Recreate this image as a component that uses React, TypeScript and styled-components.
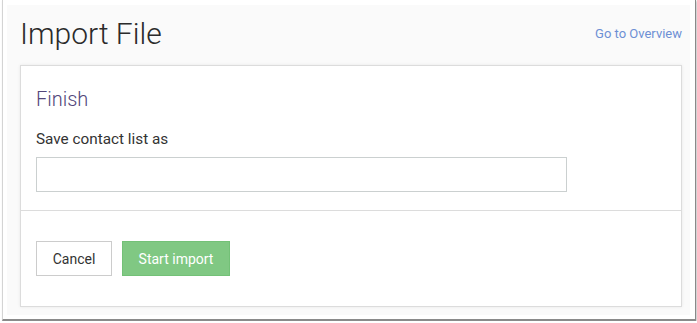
import React from "react";
import styled, { createGlobalStyle } from "styled-components";

const GlobalStyle = createGlobalStyle`
  html, body {
    margin: 0;
    padding: 0;
    background: #ffffff;
    font-family: Roboto, "Liberation Sans", Arial, sans-serif;
  }
`;

const Frame = styled.div`
  box-sizing: border-box;
  width: 694px;
  height: 321px;
  margin-left: 2px;
  padding: 5px 5px 4px 4px;
  background: #ffffff;
  border-left: 1px solid #d4d4d4;
  border-right: 1px solid #8a8a8a;
  border-bottom: 2px solid #8a8a8a;
  box-shadow: 1px 1px 2px rgba(0, 0, 0, 0.25);
`;

const Page = styled.div`
  box-sizing: border-box;
  height: 100%;
  background: #fafafa;
  padding: 0 6px 0 13px;
  display: flex;
  flex-direction: column;
`;

const Header = styled.div`
  box-sizing: border-box;
  height: 60px;
  padding-bottom: 3px;
  flex-shrink: 0;
  display: flex;
  align-items: center;
  justify-content: space-between;
`;

const Title = styled.h1`
  margin: 0;
  font-size: 30px;
  font-weight: 300;
  color: #2b2b2b;
`;

const OverviewLink = styled.a`
  font-size: 13px;
  color: #6d8fd4;
  text-decoration: none;
  margin-right: 2px;
  cursor: pointer;
`;

const Card = styled.div`
  box-sizing: border-box;
  flex-shrink: 0;
  width: 662px;
  height: 242px;
  background: #ffffff;
  border: 1px solid #dcdcdc;
  box-shadow: 0 0 3px rgba(0, 0, 0, 0.08);
  display: flex;
  flex-direction: column;
`;

const CardBody = styled.div`
  height: 145px;
  box-sizing: border-box;
  padding: 20px 15px 0 15px;
  border-bottom: 1px solid #dcdcdc;
`;

const SectionTitle = styled.h2`
  margin: 0 0 18px 0;
  font-size: 20px;
  font-weight: 300;
  color: #52467a;
  line-height: 26px;
`;

const Label = styled.label`
  display: block;
  font-size: 15.3px;
  color: #333333;
  line-height: 19px;
  margin-bottom: 8px;
`;

const TextInput = styled.input`
  box-sizing: border-box;
  width: 531px;
  height: 35px;
  border: 1px solid #cbd0d0;
  background: #ffffff;
  outline: none;
  padding: 0 10px;
  font-family: inherit;
  font-size: 14px;
`;

const CardFooter = styled.div`
  display: flex;
  gap: 10px;
  padding: 30px 15px 0 15px;
`;

const Button = styled.button<{ $primary?: boolean }>`
  box-sizing: border-box;
  height: 35px;
  padding: 0 15px;
  font-family: inherit;
  font-size: 14px;
  border: 1px solid ${(p) => (p.$primary ? "#73c177" : "#cccccc")};
  background: ${(p) => (p.$primary ? "#80c883" : "#ffffff")};
  color: ${(p) => (p.$primary ? "#ffffff" : "#333333")};
  cursor: pointer;
`;

export default function App() {
  return (
    <>
      <GlobalStyle />
      <Frame>
        <Page>
          <Header>
            <Title>Import File</Title>
            <OverviewLink>Go to Overview</OverviewLink>
          </Header>
          <Card>
            <CardBody>
              <SectionTitle>Finish</SectionTitle>
              <Label>Save contact list as</Label>
              <TextInput type="text" />
            </CardBody>
            <CardFooter>
              <Button style={{ width: 76 }}>Cancel</Button>
              <Button $primary style={{ width: 108 }}>
                Start import
              </Button>
            </CardFooter>
          </Card>
        </Page>
      </Frame>
    </>
  );
}
